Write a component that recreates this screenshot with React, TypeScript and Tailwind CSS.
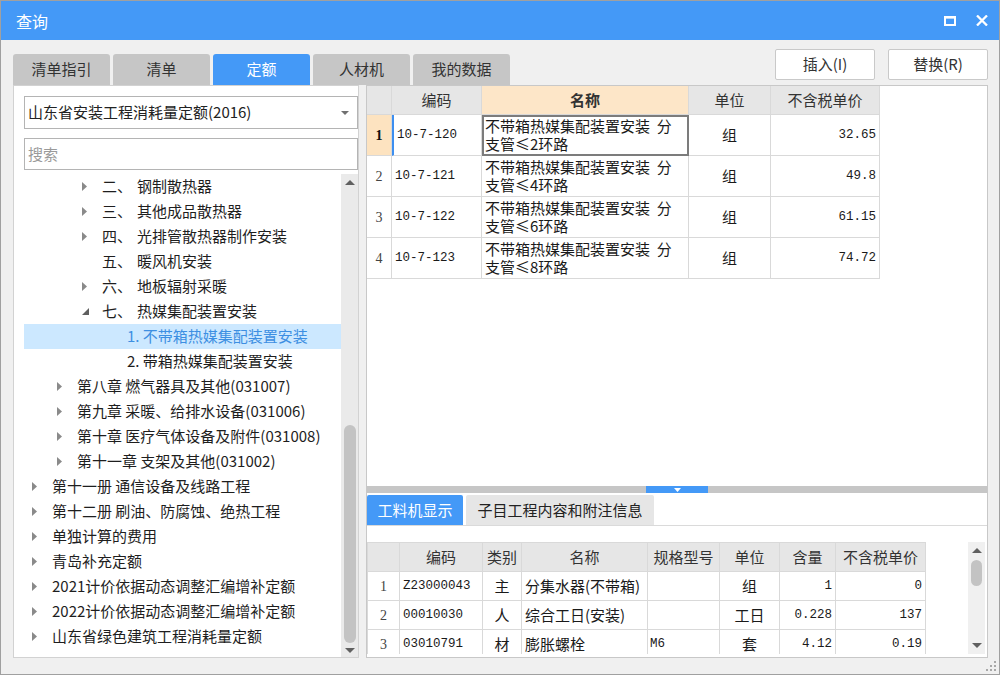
import React from "react";

type TreeNode = {
  level: 1 | 2 | 3 | 4;
  arrow: "right" | "down" | null;
  num?: string;
  text: string;
  selected?: boolean;
};

const tree: TreeNode[] = [
  { level: 3, arrow: "right", num: "二、", text: "钢制散热器" },
  { level: 3, arrow: "right", num: "三、", text: "其他成品散热器" },
  { level: 3, arrow: "right", num: "四、", text: "光排管散热器制作安装" },
  { level: 3, arrow: null, num: "五、", text: "暖风机安装" },
  { level: 3, arrow: "right", num: "六、", text: "地板辐射采暖" },
  { level: 3, arrow: "down", num: "七、", text: "热媒集配装置安装" },
  { level: 4, arrow: null, text: "1. 不带箱热媒集配装置安装", selected: true },
  { level: 4, arrow: null, text: "2. 带箱热媒集配装置安装" },
  { level: 2, arrow: "right", text: "第八章 燃气器具及其他(031007)" },
  { level: 2, arrow: "right", text: "第九章 采暖、给排水设备(031006)" },
  { level: 2, arrow: "right", text: "第十章 医疗气体设备及附件(031008)" },
  { level: 2, arrow: "right", text: "第十一章 支架及其他(031002)" },
  { level: 1, arrow: "right", text: "第十一册 通信设备及线路工程" },
  { level: 1, arrow: "right", text: "第十二册 刷油、防腐蚀、绝热工程" },
  { level: 1, arrow: "right", text: "单独计算的费用" },
  { level: 1, arrow: "right", text: "青岛补充定额" },
  { level: 1, arrow: "right", text: "2021计价依据动态调整汇编增补定额" },
  { level: 1, arrow: "right", text: "2022计价依据动态调整汇编增补定额" },
  { level: 1, arrow: "right", text: "山东省绿色建筑工程消耗量定额" },
];

const padByLevel: Record<number, string> = {
  1: "pl-[8px]",
  2: "pl-[33px]",
  3: "pl-[58px]",
  4: "pl-[83px]",
};

function RightArrow() {
  return (
    <svg width="5" height="9" viewBox="0 0 5 9">
      <path d="M0 0 L5 4.5 L0 9 Z" fill="#8a8a8a" />
    </svg>
  );
}

function DownArrow() {
  return (
    <svg width="7" height="7" viewBox="0 0 7 7">
      <path d="M7 0 L7 7 L0 7 Z" fill="#5f5f5f" />
    </svg>
  );
}

function TriUp({ w = 10, h = 5, color = "#606060" }: { w?: number; h?: number; color?: string }) {
  return (
    <svg width={w} height={h} viewBox={`0 0 ${w} ${h}`}>
      <path d={`M0 ${h} L${w / 2} 0 L${w} ${h} Z`} fill={color} />
    </svg>
  );
}

function TriDown({ w = 10, h = 5, color = "#606060" }: { w?: number; h?: number; color?: string }) {
  return (
    <svg width={w} height={h} viewBox={`0 0 ${w} ${h}`}>
      <path d={`M0 0 L${w} 0 L${w / 2} ${h} Z`} fill={color} />
    </svg>
  );
}

const topRows = [
  { n: "1", code: "10-7-120", l2: "支管≤2环路", unit: "组", price: "32.65" },
  { n: "2", code: "10-7-121", l2: "支管≤4环路", unit: "组", price: "49.8" },
  { n: "3", code: "10-7-122", l2: "支管≤6环路", unit: "组", price: "61.15" },
  { n: "4", code: "10-7-123", l2: "支管≤8环路", unit: "组", price: "74.72" },
];

const bottomRows = [
  { n: "1", code: "Z23000043", type: "主", name: "分集水器(不带箱)", spec: "", unit: "组", qty: "1", price: "0" },
  { n: "2", code: "00010030", type: "人", name: "综合工日(安装)", spec: "", unit: "工日", qty: "0.228", price: "137" },
  { n: "3", code: "03010791", type: "材", name: "膨胀螺栓", spec: "M6", unit: "套", qty: "4.12", price: "0.19" },
];

const cellB = "border-r border-b border-[#d9d9d9]";
const mono = "font-['Liberation_Mono',monospace] text-[12.5px]";

export default function App() {
  return (
    <div className="w-[1000px] h-[675px] border border-[#a0a0a0] bg-[#f0f0f0] flex flex-col relative overflow-hidden font-['Noto_Sans_CJK_SC','Noto_Sans',sans-serif] text-[#222]">
      {/* Title bar */}
      <div className="h-[39px] shrink-0 bg-[#4499f7] flex items-center justify-between pl-[15px] pr-[11px]">
        <span className="text-white text-[16px] leading-none">查询</span>
        <div className="flex items-center gap-[20px]">
          <svg width="12" height="10" viewBox="0 0 12 10">
            <rect x="1" y="1.25" width="10" height="7.75" fill="none" stroke="#fff" strokeWidth="2" />
            <rect x="0" y="0" width="12" height="2.5" fill="#fff" />
          </svg>
          <svg width="12" height="11" viewBox="0 0 12 11">
            <path d="M1 0.5 L11 10.5 M11 0.5 L1 10.5" stroke="#fff" strokeWidth="2.3" />
          </svg>
        </div>
      </div>

      {/* Body */}
      <div className="flex-1 flex flex-col pl-[12px] pr-[11px]">
        {/* Tabs row */}
        <div className="h-[45px] shrink-0 flex items-end justify-between">
          <div className="flex gap-[3px]">
            {["清单指引", "清单", "定额", "人材机", "我的数据"].map((t) => (
              <div
                key={t}
                className={`w-[97px] h-[31px] rounded-t-[3px] flex items-center justify-center text-[15px] ${
                  t === "定额" ? "bg-[#4499f7] text-white" : "bg-[#c6c6c6] text-[#333]"
                }`}
              >
                {t}
              </div>
            ))}
          </div>
          <div className="flex gap-[13px] mb-[5px]">
            {["插入(I)", "替换(R)"].map((t) => (
              <div
                key={t}
                className="w-[100px] h-[31px] bg-white border border-[#c9c9c9] rounded-[2px] flex items-center justify-center text-[15px] text-[#333]"
              >
                {t}
              </div>
            ))}
          </div>
        </div>

        {/* Panels */}
        <div className="h-[573px] shrink-0 flex gap-[7px]">
          {/* Left panel */}
          <div className="w-[346px] h-full bg-white border border-[#d2d2d2] flex flex-col">
            <div className="ml-[10px] mt-[10px] h-[33px] shrink-0 border border-[#b4b4b4] flex items-center justify-between pl-[3px] pr-[8px] text-[15px] text-[#222]">
              <span>山东省安装工程消耗量定额(2016)</span>
              <TriDown w={8} h={4} color="#707070" />
            </div>
            <div className="ml-[10px] mt-[9px] h-[32px] shrink-0 border border-[#b4b4b4] flex items-center pl-[3px] text-[15px] text-[#9a9a9a]">
              搜索
            </div>
            <div className="ml-[10px] mt-[4px] flex-1 flex min-h-0">
              <div className="flex-1 overflow-hidden">
                {tree.map((n, i) => (
                  <div
                    key={i}
                    className={`h-[25px] flex items-center text-[15px] whitespace-nowrap ${padByLevel[n.level]} ${
                      n.selected ? "bg-[#cce8ff] text-[#3d8fe2]" : "text-[#1e1e1e]"
                    }`}
                  >
                    <div className="w-[20px] shrink-0 flex items-center">
                      {n.arrow === "right" && <RightArrow />}
                      {n.arrow === "down" && <DownArrow />}
                    </div>
                    {n.num && <span className="inline-block w-[35px]">{n.num}</span>}
                    <span>{n.text}</span>
                  </div>
                ))}
              </div>
              <div className="w-[17px] shrink-0 bg-[#eaeaea] flex flex-col items-center">
                <div className="h-[16px] w-full flex items-center justify-center">
                  <TriUp w={10} h={5} />
                </div>
                <div className="h-[235px]" />
                <div className="h-[218px] w-[12px] rounded-[6px] bg-[#c3c3c3]" />
                <div className="flex-1 w-full flex items-center justify-center">
                  <TriDown w={10} h={5} />
                </div>
              </div>
            </div>
          </div>

          {/* Right panel */}
          <div className="flex-1 h-full bg-white border border-[#c8c8c8] flex flex-col">
            {/* Top grid */}
            <div className="h-[400px] shrink-0 overflow-hidden">
              <div className="grid grid-cols-[25px_90px_207px_82px_109px] w-[513px]">
                <div className={`h-[29px] bg-[#e6e6e6] ${cellB}`} />
                <div className={`h-[29px] bg-[#e6e6e6] ${cellB} flex items-center justify-center text-[15px] text-[#333]`}>编码</div>
                <div className={`h-[29px] bg-[#fde6c8] ${cellB} flex items-center justify-center text-[15px] font-bold text-[#333]`}>名称</div>
                <div className={`h-[29px] bg-[#e6e6e6] ${cellB} flex items-center justify-center text-[15px] text-[#333]`}>单位</div>
                <div className={`h-[29px] bg-[#e6e6e6] ${cellB} flex items-center justify-center text-[15px] text-[#333]`}>不含税单价</div>
                {topRows.map((r, i) => {
                  const sel = i === 0;
                  return (
                    <React.Fragment key={r.n}>
                      <div
                        className={`h-[41px] ${cellB} flex items-center justify-center font-['Liberation_Serif',serif] text-[14px] ${
                          sel ? "bg-[#fde3c0] font-bold text-[#111]" : "text-[#444]"
                        }`}
                      >
                        {r.n}
                      </div>
                      <div
                        className={`h-[41px] ${cellB} flex items-center pl-[3px] ${mono} text-[#1a1a1a] ${
                          sel ? "border-l-2 border-l-[#3d8ff0]" : ""
                        }`}
                      >
                        {r.code}
                      </div>
                      <div
                        className={`h-[41px] ${cellB} flex items-center pl-[3px] text-[15px] leading-[18px] text-[#1a1a1a] ${
                          sel ? "outline-2 outline-[#7c7c7c] -outline-offset-2" : ""
                        }`}
                      >
                        <p className="whitespace-nowrap">
                          不带箱热媒集配装置安装&nbsp;&nbsp;分
                          <br />
                          {r.l2}
                        </p>
                      </div>
                      <div className={`h-[41px] ${cellB} flex items-center justify-center text-[15px] text-[#1a1a1a]`}>{r.unit}</div>
                      <div className={`h-[41px] ${cellB} flex items-center justify-end pr-[3px] ${mono} text-[#1a1a1a]`}>{r.price}</div>
                    </React.Fragment>
                  );
                })}
              </div>
            </div>

            {/* Splitter */}
            <div className="h-[7px] shrink-0 bg-[#c6c6c6] flex justify-center">
              <div className="w-[62px] h-full bg-[#4499f7] flex items-center justify-center">
                <TriDown w={7} h={4} color="#ffffff" />
              </div>
            </div>

            {/* Bottom area */}
            <div className="flex-1 flex flex-col bg-white min-h-0">
              <div className="pt-[2px] h-[32px] shrink-0 flex gap-[3px]">
                <div className="w-[96px] h-[30px] rounded-t-[2px] bg-[#4499f7] text-white text-[15px] flex items-center justify-center">
                  工料机显示
                </div>
                <div className="w-[188px] h-[30px] rounded-t-[2px] bg-[#e6e6e6] text-[#222] text-[15px] flex items-center justify-center">
                  子目工程内容和附注信息
                </div>
              </div>
              <div className="h-[1px] shrink-0 bg-[#dadada]" />
              <div className="h-[16px] shrink-0" />
              <div className="h-[112px] shrink-0 flex">
                <div className="w-[559px] overflow-hidden border-t border-[#d9d9d9]">
                  <div className="grid grid-cols-[33px_83px_39px_126px_72px_60px_56px_90px]">
                    {["", "编码", "类别", "名称", "规格型号", "单位", "含量", "不含税单价"].map((h, i) => (
                      <div
                        key={i}
                        className={`h-[29px] bg-[#e6e6e6] ${cellB} flex items-center justify-center text-[15px] text-[#333] ${
                          i === 0 ? "border-l" : ""
                        }`}
                      >
                        {h}
                      </div>
                    ))}
                    {bottomRows.map((r) => (
                      <React.Fragment key={r.n}>
                        <div className={`h-[29px] ${cellB} border-l flex items-center justify-center font-['Liberation_Serif',serif] text-[14px] text-[#444]`}>{r.n}</div>
                        <div className={`h-[29px] ${cellB} flex items-center pl-[3px] ${mono} text-[#1a1a1a]`}>{r.code}</div>
                        <div className={`h-[29px] ${cellB} flex items-center justify-center text-[15px] text-[#1a1a1a]`}>{r.type}</div>
                        <div className={`h-[29px] ${cellB} flex items-center pl-[3px] text-[15px] text-[#1a1a1a] whitespace-nowrap`}>{r.name}</div>
                        <div className={`h-[29px] ${cellB} flex items-center pl-[2px] ${mono} text-[#1a1a1a]`}>{r.spec}</div>
                        <div className={`h-[29px] ${cellB} flex items-center justify-center text-[15px] text-[#1a1a1a]`}>{r.unit}</div>
                        <div className={`h-[29px] ${cellB} flex items-center justify-end pr-[3px] ${mono} text-[#1a1a1a]`}>{r.qty}</div>
                        <div className={`h-[29px] ${cellB} flex items-center justify-end pr-[3px] ${mono} text-[#1a1a1a]`}>{r.price}</div>
                      </React.Fragment>
                    ))}
                  </div>
                </div>
                <div className="flex-1" />
                <div className="w-[17px] shrink-0 bg-[#f0f0f0] flex flex-col items-center">
                  <div className="h-[17px] w-full flex items-center justify-center">
                    <TriUp w={10} h={5} />
                  </div>
                  <div className="h-[1px]" />
                  <div className="h-[26px] w-[11px] rounded-[6px] bg-[#c3c3c3]" />
                  <div className="flex-1" />
                  <div className="h-[17px] w-full flex items-center justify-center">
                    <TriDown w={10} h={5} />
                  </div>
                </div>
                <div className="w-[2px] shrink-0" />
              </div>
            </div>
          </div>
        </div>
      </div>

      {/* Resize grip */}
      <svg className="absolute right-[3px] bottom-[3px]" width="11" height="11" viewBox="0 0 11 11">
        <rect x="9" y="1" width="2" height="2" fill="#a8a8a8" />
        <rect x="5" y="5" width="2" height="2" fill="#a8a8a8" />
        <rect x="9" y="5" width="2" height="2" fill="#a8a8a8" />
        <rect x="1" y="9" width="2" height="2" fill="#a8a8a8" />
        <rect x="5" y="9" width="2" height="2" fill="#a8a8a8" />
        <rect x="9" y="9" width="2" height="2" fill="#a8a8a8" />
      </svg>
    </div>
  );
}
